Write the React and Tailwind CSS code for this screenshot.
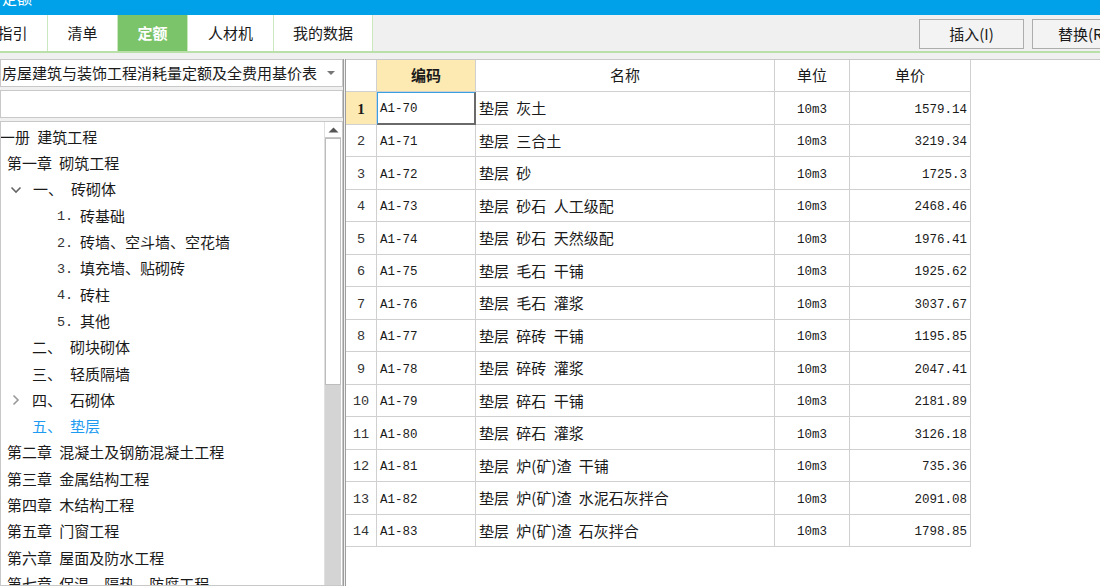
import React from "react";

const CJK = { fontFamily: '"Noto Sans CJK SC", "Noto Sans", sans-serif' };
const MONO = { fontFamily: '"Liberation Mono", "DejaVu Sans Mono", monospace' };

const rows = [
  ["A1-70", "垫层 灰土", "1579.14"],
  ["A1-71", "垫层 三合土", "3219.34"],
  ["A1-72", "垫层 砂", "1725.3"],
  ["A1-73", "垫层 砂石 人工级配", "2468.46"],
  ["A1-74", "垫层 砂石 天然级配", "1976.41"],
  ["A1-75", "垫层 毛石 干铺", "1925.62"],
  ["A1-76", "垫层 毛石 灌浆", "3037.67"],
  ["A1-77", "垫层 碎砖 干铺", "1195.85"],
  ["A1-78", "垫层 碎砖 灌浆", "2047.41"],
  ["A1-79", "垫层 碎石 干铺", "2181.89"],
  ["A1-80", "垫层 碎石 灌浆", "3126.18"],
  ["A1-81", "垫层 炉(矿)渣 干铺", "735.36"],
  ["A1-82", "垫层 炉(矿)渣 水泥石灰拌合", "2091.08"],
  ["A1-83", "垫层 炉(矿)渣 石灰拌合", "1798.85"],
];

function ChevDown() {
  return (
    <svg width="12" height="12" viewBox="0 0 12 12" className="shrink-0">
      <path d="M1.5 3.5 L6 8 L10.5 3.5" fill="none" stroke="#666" strokeWidth="1.6" />
    </svg>
  );
}
function ChevRight() {
  return (
    <svg width="12" height="12" viewBox="0 0 12 12" className="shrink-0">
      <path d="M3.5 1.5 L8 6 L3.5 10.5" fill="none" stroke="#999" strokeWidth="1.6" />
    </svg>
  );
}

function TreeRow({ children }) {
  return <div className="h-[26.3px] flex items-center whitespace-pre text-[15px] text-[#1a1a1a] [word-spacing:4px]">{children}</div>;
}

function Tree() {
  const sub = [
    ["1.", "砖基础"],
    ["2.", "砖墙、空斗墙、空花墙"],
    ["3.", "填充墙、贴砌砖"],
    ["4.", "砖柱"],
    ["5.", "其他"],
  ];
  const chapters = ["第二章 混凝土及钢筋混凝土工程", "第三章 金属结构工程", "第四章 木结构工程", "第五章 门窗工程", "第六章 屋面及防水工程", "第七章 保温、隔热、防腐工程"];
  return (
    <div className="flex-1 min-w-0 pt-[2px] overflow-hidden" style={CJK}>
      <TreeRow><span className="ml-[-16px]">第一册 建筑工程</span></TreeRow>
      <TreeRow><span className="ml-[6px]">第一章 砌筑工程</span></TreeRow>
      <TreeRow>
        <span className="ml-[9px] w-[23px] flex"><ChevDown /></span>
        <span className="w-[38px]">一、</span>
        <span>砖砌体</span>
      </TreeRow>
      {sub.map(([n, t]) => (
        <TreeRow key={n}>
          <span className="ml-[56px] w-[23px] text-[13.5px] text-[#333] pt-[3px]" style={MONO}>{n}</span>
          <span>{t}</span>
        </TreeRow>
      ))}
      <TreeRow><span className="ml-[31px] w-[38px]">二、</span><span>砌块砌体</span></TreeRow>
      <TreeRow><span className="ml-[31px] w-[38px]">三、</span><span>轻质隔墙</span></TreeRow>
      <TreeRow>
        <span className="ml-[9px] w-[22px] flex"><ChevRight /></span>
        <span className="w-[38px]">四、</span>
        <span>石砌体</span>
      </TreeRow>
      <TreeRow><span className="ml-[31px] w-[38px] text-[#1e9bf0]">五、</span><span className="text-[#1e9bf0]">垫层</span></TreeRow>
      {chapters.map((c) => (
        <TreeRow key={c}><span className="ml-[6px]">{c}</span></TreeRow>
      ))}
    </div>
  );
}

function Tab({ label, active, className = "" }) {
  return (
    <div
      className={
        "h-full flex items-center justify-center text-[15px] border-r border-[#c9e8bd] " +
        (active ? "bg-[#7cc46a] text-white font-bold " : "bg-white text-[#1a1a1a] ") +
        className
      }
      style={CJK}
    >
      {label}
    </div>
  );
}

export default function App() {
  return (
    <div className="w-[1100px] h-[586px] overflow-hidden bg-[#f0f0f0] flex flex-col" style={CJK}>
      {/* title bar */}
      <div className="h-[15px] bg-[#00a1e9] overflow-hidden shrink-0">
        <div className="mt-[-13px] ml-[2px] text-white text-[15px]">定额</div>
      </div>
      {/* tab row */}
      <div className="h-[38px] shrink-0 flex items-stretch border-b-2 border-[#b8e0a8] overflow-hidden">
        <div className="flex items-stretch overflow-hidden h-[37px]">
          <Tab label="指引" className="w-[70px] ml-[-22px]" />
          <Tab label="清单" className="w-[70px]" />
          <Tab label="定额" active className="w-[70px]" />
          <Tab label="人材机" className="w-[86px]" />
          <Tab label="我的数据" className="w-[99px]" />
        </div>
        <div className="flex-1" />
        <div className="flex items-start pt-[4px] gap-[8px] mr-[-32px] shrink-0">
          <button className="w-[105px] h-[30px] border border-[#adadad] bg-[#f3f3f3] text-[15px] text-[#1a1a1a]" style={CJK}>插入(I)</button>
          <button className="w-[100px] h-[30px] border border-[#adadad] bg-[#f3f3f3] text-[15px] text-[#1a1a1a] text-left pl-[25px] whitespace-nowrap" style={CJK}>替换(R)</button>
        </div>
      </div>

      <div className="flex-1 flex min-h-0 pt-[6px]">
        {/* left panel */}
        <div className="w-[343px] shrink-0 flex flex-col">
          <div className="h-[28px] bg-white border border-[#c8c8c8] flex items-center overflow-hidden">
            <span className="pl-[1px] text-[15px] text-[#1a1a1a] whitespace-nowrap flex-1 overflow-hidden">房屋建筑与装饰工程消耗量定额及全费用基价表（</span>
            <svg width="10" height="6" viewBox="0 0 10 6" className="mx-[6px] shrink-0"><path d="M1 1 L5 5 L9 1Z" fill="#777" /></svg>
          </div>
          <div className="h-[28px] mt-[3px] bg-white border border-[#c8c8c8]" />
          <div className="flex-1 mt-[3px] bg-white border border-[#c8c8c8] flex min-h-0">
            <Tree />
            <div className="w-[17px] shrink-0 flex flex-col border-l border-[#e0e0e0] mr-[1px]">
              <div className="h-[16px] flex items-center justify-center bg-white border-b border-[#c8c8c8]">
                <svg width="11" height="6" viewBox="0 0 11 6"><path d="M0.5 5.5 L5.5 0.5 L10.5 5.5Z" fill="#555" /></svg>
              </div>
              <div className="h-[247px] bg-white border border-[#bdbdbd]" />
              <div className="flex-1 bg-[#d4d4d4]" />
            </div>
          </div>
        </div>
        {/* splitter */}
        <div className="w-[3px] shrink-0 bg-[#f0f0f0] border-l border-r border-[#9d9d9d]" />
        {/* table area */}
        <div className="flex-1 bg-white border-t border-[#c8c8c8] overflow-hidden">
          <div className="w-[625px]">
            <div className="flex h-[32px] border-b border-[#d0d0d0] text-[15px] text-[#1a1a1a]">
              <div className="w-[31px] border-r border-[#d0d0d0]" />
              <div className="w-[99px] border-r border-[#d0d0d0] bg-[#fde9b2] flex items-center justify-center font-bold">编码</div>
              <div className="w-[299px] border-r border-[#d0d0d0] flex items-center justify-center">名称</div>
              <div className="w-[75px] border-r border-[#d0d0d0] flex items-center justify-center">单位</div>
              <div className="w-[121px] border-r border-[#d0d0d0] flex items-center justify-center">单价</div>
            </div>
            {rows.map(([code, name, price], i) => (
              <div key={code} className="flex h-[32.5px] border-b border-[#d0d0d0] text-[#1a1a1a]">
                {i === 0 ? (
                  <div className="w-[31px] border-r border-[#d0d0d0] bg-[#fde9b2] flex items-center justify-center font-bold text-[15px] pt-[2px]" style={{ fontFamily: '"Liberation Serif", serif' }}>1</div>
                ) : (
                  <div className="w-[31px] border-r border-[#d0d0d0] flex items-center justify-center text-[13.5px] text-[#333] pt-[4px]" style={MONO}>{i + 1}</div>
                )}
                {i === 0 ? (
                  <div className="w-[99px] border-t border-l border-[#3aa0e0] border-r-2 border-b-2 border-r-[#6a6a6a] border-b-[#6a6a6a] flex items-center pl-[2px] pt-[4px] text-[12.5px] -mb-px" style={MONO}>{code}</div>
                ) : (
                  <div className="w-[99px] border-r border-[#d0d0d0] flex items-center pl-[3px] pt-[5px] text-[12.5px]" style={MONO}>{code}</div>
                )}
                <div className="w-[299px] border-r border-[#d0d0d0] flex items-center pl-[3px] pt-[1px] text-[15px] whitespace-pre [word-spacing:4px]" style={CJK}>{name}</div>
                <div className="w-[75px] border-r border-[#d0d0d0] flex items-center justify-center pt-[5px] text-[12.5px]" style={MONO}>10m3</div>
                <div className="w-[121px] border-r border-[#d0d0d0] flex items-center justify-end pr-[3px] pt-[5px] text-[12.5px]" style={MONO}>{price}</div>
              </div>
            ))}
          </div>
        </div>
      </div>
    </div>
  );
}
